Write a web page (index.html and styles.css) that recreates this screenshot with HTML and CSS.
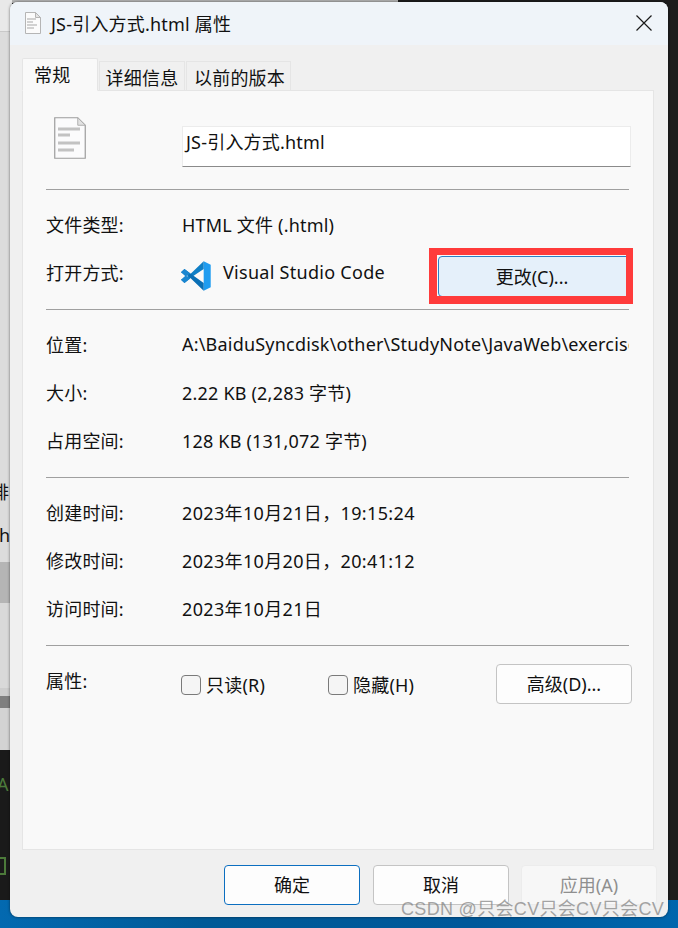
FILE: index.html
```html
<!DOCTYPE html>
<html lang="zh">
<head>
<meta charset="utf-8">
<title>JS-引入方式.html 属性</title>
<link rel="stylesheet" href="styles.css">
</head>
<body>
<div class="desktop">
  <div class="top-strip"></div>
  <div class="left-strip">
    <div class="ls ls-a"></div>
    <div class="ls ls-b"><span class="ls-cjk">排</span><span class="ls-h">h</span></div>
    <div class="ls ls-c"></div>
    <div class="ls ls-d"></div>
    <div class="ls ls-e"></div>
    <div class="ls ls-f"></div>
    <div class="ls ls-g"></div>
    <div class="ls ls-h2"><span class="ls-green">A</span><span class="ls-box"></span></div>
    <div class="ls ls-i"></div>
  </div>
  <div class="bottom-strip"></div>
</div>

<main class="dialog">
  <header class="titlebar">
    <svg class="title-icon" viewBox="0 0 16 22" width="16" height="22"><path d="M.5.5h10l5 5v16H.5z" fill="#fbfbfb" stroke="#b5b5b5"/><path d="M10.5.5v5h5z" fill="#e4e4e4" stroke="#b5b5b5"/><path d="M2 7h9M2 10h6M2 13h10M2 16h7" stroke="#c4c4c4" stroke-width="1.4"/></svg>
    <span class="title-text">JS-引入方式.html 属性</span>
    <svg class="close" viewBox="0 0 16 16" width="16" height="16"><path d="M.5.5l15 15M15.500.5l-15 15" stroke="#1a1a1a" stroke-width="1.2" fill="none"/></svg>
  </header>

  <div class="content">
    <nav class="tabs">
      <div class="tab tab-active">常规</div>
      <div class="tab">详细信息</div>
      <div class="tab">以前的版本</div>
    </nav>

    <section class="panel">
      <div class="name-row">
        <svg class="file-icon" viewBox="0 0 32 42" width="32" height="42"><path d="M.75.75h23l7.500 7.500v33H.750z" fill="#fbfbfc" stroke="#9c9c9c" stroke-width="1.200"/><path d="M23.750.75v7.500h7.500z" fill="#e2e2e2" stroke="#b0b0b0"/><path d="M4 12h22M4 18h12M4 26h22M4 33h16" stroke="#c2c2c2" stroke-width="3"/></svg>
        <div class="name-input">JS-引入方式.html</div>
      </div>
      <hr class="rule">
      <div class="row"><span class="label">文件类型:</span><span class="value">HTML 文件 (.html)</span></div>
      <div class="row row-app">
        <span class="label">打开方式:</span>
        <span class="app">
          <svg class="vscode" viewBox="0 0 100 100" width="32" height="32">
            <path d="M74 4 L96 15 V85 L74 96 Z" fill="#1f9cf0"/>
            <path d="M74 4 L74 28 L38 52 L14 72 L3 62 L26 50 Z" fill="#0f7fc6"/>
            <path d="M3 38 L14 28 L38 46 L74 72 V96 L26 50 Z" fill="#0a6fb5"/>
            <path d="M3 38 L14 28 L32 42 L20 50 L32 58 L14 72 L3 62 L16 50 Z" fill="#1a86d0"/>
          </svg>
          <span class="app-name">Visual Studio Code</span>
        </span>
        <button class="btn btn-change">更改(C)...</button>
        <span class="highlight"></span>
      </div>
      <hr class="rule">
      <div class="row"><span class="label">位置:</span><span class="value value-clip">A:\BaiduSyncdisk\other\StudyNote\JavaWeb\exercise\JS</span></div>
      <div class="row"><span class="label">大小:</span><span class="value">2.22 KB (2,283 字节)</span></div>
      <div class="row"><span class="label">占用空间:</span><span class="value">128 KB (131,072 字节)</span></div>
      <hr class="rule">
      <div class="row"><span class="label">创建时间:</span><span class="value value-date">2023年10月21日，19:15:24</span></div>
      <div class="row"><span class="label">修改时间:</span><span class="value value-date">2023年10月20日，20:41:12</span></div>
      <div class="row"><span class="label">访问时间:</span><span class="value value-date">2023年10月21日</span></div>
      <hr class="rule">
      <div class="row row-attrs">
        <span class="label">属性:</span>
        <label class="check check-ro"><span class="box"></span>只读(R)</label>
        <label class="check check-hid"><span class="box"></span>隐藏(H)</label>
        <button class="btn btn-adv">高级(D)...</button>
      </div>
    </section>

    <footer class="actions">
      <button class="btn btn-foot btn-primary">确定</button>
      <button class="btn btn-foot">取消</button>
      <button class="btn btn-foot btn-disabled">应用(A)</button>
    </footer>
  </div>
</main>
<div class="watermark">CSDN @只会CV只会CV只会CV</div>
</body>
</html>
```
FILE: styles.css
```css
* { box-sizing: border-box; }
html, body { margin: 0; height: 100%; }
body {
  position: relative;
  width: 678px;
  height: 928px;
  overflow: hidden;
  background: #1d1d1d;
  font-family: "Noto Sans", "Noto Sans CJK SC", sans-serif;
  font-size: 18px;
  letter-spacing: .2px;
  color: #111;
}
.desktop { position: absolute; inset: 0; }
.top-strip { position: absolute; left: 0; top: 0; width: 398px; height: 3px; background: #b4b4b4; }
.left-strip { position: absolute; left: 0; top: 0; width: 12px; height: 928px; display: flex; flex-direction: column; }
.bottom-strip { position: absolute; left: 0; right: 0; bottom: 0; height: 28px; background: linear-gradient(90deg, #0369b0, #005a97 30%, #00589a 70%, #0066ad); }
.ls { flex: none; position: relative; overflow: hidden; }
.ls-a { height: 32px; background: #e9e9e9; border-bottom: 1px solid #c9c9c9; }
.ls-b { height: 530px; background: #dcdcdc; }
.ls-cjk { position: absolute; left: -9px; top: 446px; font-size: 18px; }
.ls-h { position: absolute; left: -1px; top: 491px; font-size: 18px; }
.ls-c { height: 41px; background: #b5b5b5; }
.ls-d { height: 85px; background: #d9d9d9; }
.ls-e { height: 8px; background: #cdcdcd; }
.ls-f { height: 12px; background: #7f7f7f; }
.ls-g { height: 42px; background: #d3d3d3; }
.ls-h2 { height: 150px; background: #1a1a1a; }
.ls-green { position: absolute; left: -3px; top: 22px; color: #4c7a3a; font-size: 18px; }
.ls-box { position: absolute; left: -8px; top: 107px; width: 14px; height: 18px; border: 2px solid #4c7a3a; }
.ls-i { height: 28px; background: #0369b0; }

.dialog {
  position: absolute;
  left: 10px;
  top: 2px;
  width: 658px;
  height: 915px;
  display: flex;
  flex-direction: column;
  background: #f0f0f0;
  border-radius: 8px;
  overflow: hidden;
  box-shadow: 0 0 3px rgba(0,0,0,.55);
}
.titlebar { flex: none; height: 43px; display: flex; align-items: center; background: #eff4f9; padding: 0 16px 2px 15px; }
.title-icon { flex: none; margin-right: 10px; }
.title-text { flex: 1; }
.close { flex: none; }

.content { flex: 1; display: flex; flex-direction: column; padding: 14px 14px 0 12px; }
.tabs { flex: none; display: flex; align-items: flex-end; gap: 1px; height: 32px; position: relative; z-index: 1; margin-bottom: -1px; }
.tab { height: 30px; padding: 2px 0 0; display: flex; align-items: center; justify-content: center; background: #f0f0f0; border: 1px solid #e5e5e5; }
.tab:nth-child(2) { width: 86px; }
.tab:nth-child(3) { width: 105px; padding-left: 2px; }
.tab-active { width: 76px; height: 33px; padding: 0 0 1px 11px; justify-content: flex-start; background: #f9f9f9; border-bottom-color: #f9f9f9; border-radius: 2px 2px 0 0; }

.panel { flex: none; height: 760px; background: #f9f9f9; border: 1px solid #e5e5e5; padding: 0 24px 0 23px; }
.name-row { height: 98px; display: flex; align-items: flex-start; }
.file-icon { flex: none; margin-top: 26px; margin-left: 8px; }
.name-input {
  margin-top: 35px;
  margin-left: 96px;
  width: 449px;
  height: 41px;
  margin-right: -2px;
  background: #fff;
  border: 1px solid #ececec;
  border-bottom: 1px solid #8a8a8a;
  padding: 2px 0 0 3px;
  line-height: 26px;
}
.rule { border: 0; border-top: 1px solid #a0a0a0; margin: 0; height: 1px; }
.rule + .row { margin-top: 11px; }
.row + .rule { margin-top: 12px; }
.row { height: 48px; padding-bottom: 2px; display: flex; align-items: center; position: relative; }
.label { flex: none; width: 136px; }
.value { white-space: nowrap; }
.value-date { letter-spacing: .35px; }
.value-clip { width: 449px; overflow: hidden; }
.app { display: flex; align-items: center; }
.vscode { flex: none; margin-left: -2px; margin-right: 11px; margin-top: 8px; }
.app-name { letter-spacing: .28px; }
.btn {
  font: inherit;
  letter-spacing: 0;
  color: #111;
  background: #fdfdfd;
  border: 1px solid #c4c4c4;
  border-radius: 4px;
  padding: 0 0 2px;
  height: 41px;
}
.btn-change { position: absolute; left: 392px; top: 7px; width: 194px; padding-right: 6px; background: #e5f0fa; border-color: #2b7fc4; }
.highlight { position: absolute; left: 383px; top: -1px; width: 204px; height: 56px; border: 8px solid #ff3b3b; border-top-width: 7px; border-right-width: 7px; }
.row-attrs { gap: 0; }
.check { display: flex; align-items: center; gap: 5px; }
.check-ro { width: 146px; margin-top: 8px; margin-left: -1px; margin-right: 1px; }
.check-hid { margin-top: 8px; }
.box { width: 20px; height: 20px; margin-top: 2px; background: #f5f5f5; border: 1px solid #7a7a7a; border-radius: 4px; }
.btn-adv { position: absolute; left: 450px; top: 7px; width: 136px; height: 40px; }
.actions { flex: none; display: flex; gap: 13px; padding: 15px 0 0 202px; margin-right: -3px; }
.btn-foot { width: 136px; height: 40px; }
.btn-primary { border-color: #0c6fc0; }
.btn-disabled { background: #f7f7f7; border-color: #ececec; color: #8f8f8f; margin-left: -1px; }
.watermark { position: absolute; left: 401px; top: 898px; font-family: "Liberation Sans", "Noto Sans CJK SC", sans-serif; font-size: 18px; letter-spacing: .32px; line-height: 22px; color: rgba(135,135,135,.75); white-space: nowrap; }
```
